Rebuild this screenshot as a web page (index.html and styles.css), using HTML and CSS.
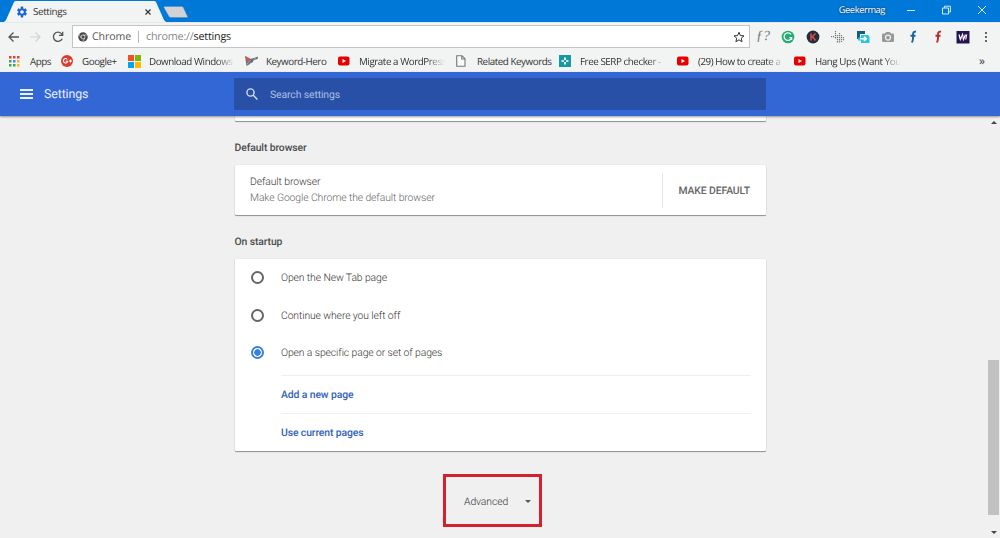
FILE: index.html
```
<!DOCTYPE html>
<html lang="en">
<head>
    <meta charset="UTF-8">
    <meta name="viewport" content="width=device-width, initial-scale=1.0">
    <title>Settings</title>
    <link rel="stylesheet" href="styles.css">
</head>
<body>

    <!-- Tab strip -->
    <div class="tabstrip">
        <div class="tab">
            <svg class="tab-bg" width="162" height="22" viewBox="0 0 162 22"><path d="M0 22L2 20L10 2Q10.500 1 12 1H150Q151.500 1 152 2L160 20L162 22Z" fill="#f2f3f3"/></svg>
            <svg class="gear" width="12" height="12" viewBox="0 0 24 24"><path fill="#1a66d0" d="M19.400 13l.1-1-.1-1 2.500-2-2.500-4.300-3 1.200-1.800-1L14.200 1H9.800l-.4 3.900-1.800 1-3-1.200L2.100 9l2.500 2-.1 1 .1 1-2.500 2 2.500 4.300 3-1.200 1.800 1 .4 3.900h4.400l.4-3.900 1.800-1 3 1.200 2.500-4.300zM12 15.600a3.600 3.600 0 1 1 0-7.200 3.600 3.600 0 0 1 0 7.200z"/></svg>
            <span class="tab-title">Settings</span>
            <svg class="tab-close" width="6" height="6" viewBox="0 0 6 6"><path d="M.5.5l5 5m0-5l-5 5" stroke="#333" stroke-width="1.200"/></svg>
        </div>
        <svg class="new-tab" width="26" height="13" viewBox="0 0 26 13"><path d="M1.500.5H18.500Q20 .5 20.500 1.800L25 11.500H8Q6.500 11.500 6 10.500L.8 1.500Z" fill="#d0d2d6" stroke="#4d88bd" stroke-width=".5"/></svg>
        <span class="user">Geekermag</span>
        <svg class="window-buttons" width="80" height="10" viewBox="0 0 80 10" fill="none" stroke="#d6eaff" stroke-width="1"><path d="M1 5.500H9M36.500 3H42.500V9H36.500ZM38.500 3V1.200H44.400V7H42.500M72 1l8 8m0-8l-8 8"/></svg>
    </div>

    <!-- Toolbar -->
    <div class="toolbar">
        <svg class="nav-icons" width="56" height="14" viewBox="0 0 56 14" fill="none"><path d="M11 7H1M5.500 2.500L1 7l4.500 4.500" stroke="#555" stroke-width="1.300"/><path d="M22 7H32M27.500 2.500L32 7l-4.500 4.500" stroke="#d3d3d3" stroke-width="1.200"/><path d="M54.200 8.700A4.600 4.600 0 1 1 53.500 3.800L54.500 5M54.700 1.800V5.400H51" stroke="#555" stroke-width="1.300"/></svg>
        <div class="omnibox">
            <svg width="10" height="10" viewBox="0 0 20 20"><circle cx="10" cy="10" r="9.500" fill="#484848"/><circle cx="10" cy="10" r="4" fill="#484848" stroke="#e8e8e8" stroke-width="1.500"/><path d="M10 6H19M6.500 12L2 4.500M13.500 12L9 19.500" stroke="#e8e8e8" stroke-width="1.300"/></svg>
            <span class="origin">Chrome</span>
            <span class="url">chrome://<b>settings</b></span>
            <svg class="star" width="12" height="12" viewBox="0 0 24 24"><path d="M12 2.500l2.800 6.600 7.200.6-5.500 4.700 1.700 7L12 17.700l-6.200 3.700 1.700-7L2 9.700l7.200-.6z" fill="none" stroke="#333" stroke-width="2"/></svg>
        </div>
        <div class="extensions">
            <span class="fq">ƒ?</span>
            <svg width="14" height="14" viewBox="0 0 14 14"><circle cx="7" cy="7" r="6.300" fill="#24ad70"/><path d="M10 4.400A3.800 3.800 0 1 0 10.600 7.600H8.300M10.600 7.600V10" fill="none" stroke="#fff" stroke-width="1.300"/></svg>
            <svg width="14" height="14" viewBox="0 0 14 14"><circle cx="7" cy="7" r="6.400" fill="#252d3d"/><path d="M5 3.500V10.500M9.500 3.500L5.500 7.500M6.500 6.500L9.500 10.500" fill="none" stroke="#cf4f4f" stroke-width="1.600"/></svg>
            <svg width="14" height="14" viewBox="0 0 14 14"><path d="M4.500 1V9M6.500 5V13M8.500 3V13M10.500 5V12M2.500 6V8M.5 6V8M12.500 7V11" fill="none" stroke="#777" stroke-width="1.200" stroke-dasharray="1.200 .7"/></svg>
            <svg width="14" height="14" viewBox="0 0 14 14"><path d="M1 1H9V4H4V9H1Z" fill="#155c80"/><path d="M5 5H12L13.500 6.500V13H5V10.500H2V7.500H5Z" fill="#27c6dc"/><path d="M4 8.800H10M8 6.500L10.300 8.800L8 11" fill="none" stroke="#fff" stroke-width="1.500"/></svg>
            <svg width="14" height="14" viewBox="0 0 14 14"><path d="M2 3.500H4L5 2H9L10 3.500H12Q13 3.500 13 4.500V11Q13 12 12 12H2Q1 12 1 11V4.500Q1 3.500 2 3.500Z" fill="#999"/><circle cx="7" cy="7.600" r="2.500" fill="#999" stroke="#f2f2f2" stroke-width="1.200"/></svg>
            <svg width="14" height="14" viewBox="0 0 14 14"><path d="M10 1.700C7.500 1.200 7 3 7 5V8.500Q7 11 5.700 12.500M4.500 5.800H9.500" fill="none" stroke="#17659a" stroke-width="1.900"/></svg>
            <svg width="14" height="14" viewBox="0 0 14 14"><path d="M10 1.700C7.500 1.200 7 3 7 5V8.500Q7 11 5.700 12.500M4.500 5.800H9.500" fill="none" stroke="#bd2a25" stroke-width="1.900"/></svg>
            <svg width="14" height="14" viewBox="0 0 14 14"><path d="M.5 1H13.500V13.500H.5Z" fill="#221650"/><path d="M3 4.500L4.300 9.500L6.500 4.500L7.500 9.500L9.500 4.500M10.700 4.500L9.700 9.500" fill="none" stroke="#fff" stroke-width="1.200"/><path d="M6 9.500L7.500 5" stroke="#d058c8"/></svg>
            <svg class="dots" width="4" height="12" viewBox="0 0 4 12" fill="#444"><circle cx="2" cy="2" r="1.100"/><circle cx="2" cy="6" r="1.100"/><circle cx="2" cy="10" r="1.100"/></svg>
        </div>
    </div>

    <!-- Bookmarks bar -->
    <div class="bookmarks">
        <div class="bookmark">
            <svg width="11" height="11" viewBox="0 0 11 11"><path fill="#db4437" d="M0 0h2.500v2.500H0zM4 0h2.500v2.500H4zM8 0h2.500v2.500H8z"/><path fill="#3aa757" d="M0 4h2.500v2.500H0zM0 8h2.500v2.500H0zM4 8h2.500v2.500H4z"/><path fill="#4688f1" d="M4 4h2.500v2.500H4z"/><path fill="#f4b71e" d="M8 4h2.500v2.500H8zM8 8h2.500v2.500H8z"/></svg>
            <span>Apps</span>
        </div>
        <div class="bookmark">
            <svg width="12" height="12" viewBox="0 0 12 12"><circle cx="6" cy="6" r="6" fill="#d53e31"/><path d="M6.300 4.300A2.200 2.200 0 1 0 6.800 6.200H4.700M8 6H11M9.500 4.500V7.500" fill="none" stroke="#fff" stroke-width="1.100"/></svg>
            <span>Google+</span>
        </div>
        <div class="bookmark fade">
            <svg width="13" height="13" viewBox="0 0 13 13"><path fill="#f05022" d="M0 0h6v6H0z"/><path fill="#7db901" d="M7 0h6v6H7z"/><path fill="#03a4ef" d="M0 7h6v6H0z"/><path fill="#ffb901" d="M7 7h6v6H7z"/></svg>
            <span>Download Windows</span>
        </div>
        <div class="bookmark">
            <svg width="14" height="12" viewBox="0 0 14 12"><path d="M0 1L5 4L9 3L5 9L1.500 11Z" fill="#65758b"/><path d="M0 1L6 4L3 7Z" fill="#de5149"/><path d="M5 7L8 3.500L13 1.500L12.500 4L9 5L7 8Z" fill="#586b83"/><path d="M2 9L5.500 5M8 5L11 3" stroke="#d98a85"/></svg>
            <span>Keyword-Hero</span>
        </div>
        <div class="bookmark fade">
            <svg width="12" height="12" viewBox="0 0 12 12"><rect y="1.500" width="11.500" height="9" rx="2" fill="#e60000"/><path d="M4.500 4L8 6L4.500 8Z" fill="#fff"/></svg>
            <span>Migrate a WordPress</span>
        </div>
        <div class="bookmark">
            <svg width="10" height="12" viewBox="0 0 10 12"><path d="M.7.700H6L9 3.700V11.300H.7ZM5.800.7V4H9" fill="#fafafa" stroke="#777" stroke-width="1.100"/></svg>
            <span>Related Keywords</span>
        </div>
        <div class="bookmark fade">
            <svg width="12" height="12" viewBox="0 0 12 12"><path d="M0 0h12v12H0z" fill="#1699a3"/><path d="M6 2.500V5M6 7V9.500M2.500 6H5M7 6H9.500" stroke="#fff" stroke-width="1.700"/></svg>
            <span>Free SERP checker -</span>
        </div>
        <div class="bookmark fade">
            <svg width="12" height="12" viewBox="0 0 12 12"><rect y="1.500" width="11.500" height="9" rx="2" fill="#e60000"/><path d="M4.500 4L8 6L4.500 8Z" fill="#fff"/></svg>
            <span>(29) How to create a</span>
        </div>
        <div class="bookmark fade">
            <svg width="12" height="12" viewBox="0 0 12 12"><rect y="1.500" width="11.500" height="9" rx="2" fill="#e60000"/><path d="M4.500 4L8 6L4.500 8Z" fill="#fff"/></svg>
            <span>Hang Ups (Want You</span>
        </div>
        <div class="more">»</div>
    </div>

    <!-- Settings header -->
    <header>
        <svg class="menu" width="13" height="10" viewBox="0 0 13 10"><path d="M0 1H13M0 5H13M0 9H13" stroke="#e8efff" stroke-width="1.800"/></svg>
        <h1>Settings</h1>
        <div class="search">
            <svg width="12" height="12" viewBox="0 0 12 12" fill="none" stroke="#d5def2" stroke-width="1.400"><circle cx="4.500" cy="4.500" r="3.600"/><path d="M7.200 7.200L11.400 11.400"/></svg>
            <span>Search settings</span>
        </div>
    </header>

    <main>
        <div class="content">
            <div class="card card-previous"></div>

            <h2>Default browser</h2>
            <div class="card default-card">
                <div class="default-text">
                    <p>Default browser</p>
                    <p class="secondary">Make Google Chrome the default browser</p>
                </div>
                <div class="default-action">MAKE DEFAULT</div>
            </div>

            <h2>On startup</h2>
            <div class="card startup-card">
                <div class="option"><i class="radio"></i>Open the New Tab page</div>
                <div class="option"><i class="radio"></i>Continue where you left off</div>
                <div class="option"><i class="radio checked"></i>Open a specific page or set of pages</div>
                <div class="link-row">Add a new page</div>
                <div class="link-row">Use current pages</div>
            </div>

            <div class="advanced">
                <span>Advanced</span>
                <i class="caret"></i>
            </div>
        </div>

        <div class="scrollbar">
            <i class="arrow up"></i>
            <div class="thumb"></div>
            <i class="arrow down"></i>
        </div>
    </main>

</body>
</html>
```
FILE: styles.css
```
* {
    box-sizing: border-box;
}

body {
    margin: 0;
    width: 1000px;
    height: 538px;
    overflow: hidden;
    display: flex;
    flex-direction: column;
    background: #f0f0f0;
    font-family: Roboto, sans-serif;
    font-size: 10.4px;
    font-weight: 300;
    letter-spacing: -0.11px;
    color: #333;
    text-rendering: geometricPrecision;
}

svg {
    display: block;
    flex-shrink: 0;
}

/* Tab strip */
.tabstrip {
    height: 22px;
    display: flex;
    background: #0078d7;
    font-family: "Open Sans", sans-serif;
    font-size: 9.8px;
    font-weight: 400;
}

.tab {
    position: relative;
    display: flex;
    align-items: center;
    width: 162px;
    height: 22px;
    margin-left: 4px;
    padding: 1px 10px 0 12px;
}

.tab-bg {
    position: absolute;
    left: 0;
    top: 0;
}

.gear,
.tab-title,
.tab-close {
    position: relative;
}

.tab-title {
    margin-left: 5px;
    color: #333;
    letter-spacing: -0.35px;
}

.tab-close {
    margin-left: auto;
    margin-right: 5px;
}

.new-tab {
    margin: 6px 0 0 -3px;
}

.user {
    margin-left: auto;
    margin-right: 21px;
    line-height: 20px;
    color: #fff;
    font-size: 9.3px;
    letter-spacing: -0.4px;
    text-shadow: 0 0 2px #123;
}

.window-buttons {
    margin: 5px 14px 0 0;
}

/* Toolbar */
.toolbar {
    height: 28px;
    display: flex;
    align-items: center;
    background: #f2f3f3;
    border-top: 1px solid #e2e9f0;
    font-family: "Open Sans", sans-serif;
    font-weight: 400;
}

.nav-icons {
    margin-left: 8px;
}

.omnibox {
    width: 678px;
    height: 23px;
    margin-left: 8px;
    padding: 0 4px 0 5px;
    display: flex;
    align-items: center;
    background: #fff;
    border: 1px solid #c4c4c4;
    font-size: 10.8px;
    letter-spacing: -0.22px;
}

.origin {
    width: 47px;
    margin-left: 4px;
    line-height: 12px;
    border-right: 1px solid #bbb;
    color: #555;
    font-size: 10.6px;
    letter-spacing: -0.1px;
}

.url {
    margin-left: 7px;
    color: #888;
}

.url b {
    font-weight: normal;
    color: #222;
}

.star {
    margin-left: auto;
}

.extensions {
    flex: 1;
    display: flex;
    align-items: center;
    gap: 11px;
    padding-left: 6px;
}

.fq {
    width: 14px;
    font: italic 14px "Liberation Serif", serif;
    color: #777;
}

.dots {
    margin-left: 3px;
}

/* Bookmarks bar */
.bookmarks {
    height: 22px;
    display: grid;
    grid-template-columns: 52px 67px 117px 93px 118px 103px 118px 117px 185px auto;
    align-items: center;
    padding-left: 9px;
    background: #f2f3f3;
    font-family: "Open Sans", sans-serif;
    font-size: 9.8px;
    font-weight: 400;
    letter-spacing: -0.44px;
    color: #333;
}

.bookmark {
    display: grid;
    grid-template-columns: 21px auto;
    align-items: center;
    justify-content: start;
    white-space: nowrap;
}

.fade span {
    width: 86px;
    -webkit-mask-image: linear-gradient(to right, #000 68px, transparent 86px);
    mask-image: linear-gradient(to right, #000 68px, transparent 86px);
}

.more {
    font-size: 12px;
    line-height: 12px;
}

/* Settings header */
header {
    position: relative;
    z-index: 1;
    height: 44px;
    display: flex;
    align-items: center;
    padding-left: 20px;
    background: #3367d6;
    box-shadow: 0 1px 2px rgba(0, 0, 0, 0.4);
}

h1 {
    width: 190px;
    margin: 1px 0 0 11px;
    font-size: 12.4px;
    font-weight: 400;
    color: #e8efff;
}

.search {
    width: 532px;
    height: 32px;
    display: flex;
    align-items: center;
    gap: 12px;
    padding-left: 12px;
    background: #2850a7;
    border-radius: 1px;
    font-size: 10.4px;
    font-weight: 400;
    color: #aebfe5;
}

/* Page */
main {
    flex: 1;
    display: flex;
    justify-content: space-between;
}

.content {
    width: 531px;
    margin-left: 234.5px;
}

.card {
    background: #fff;
    border-radius: 1px;
    box-shadow: 0 1px 1px rgba(0, 0, 0, 0.4), 0 0 1px rgba(0, 0, 0, 0.2);
}

.card-previous {
    height: 5px;
}

h2 {
    margin: 0;
    font-size: 10.4px;
    line-height: 14px;
    font-weight: 500;
    color: #4c4c4c;
}

.card-previous + h2 {
    margin-top: 20px;
}

.default-card {
    height: 50px;
    margin: 10px 0 20px;
    display: flex;
    align-items: center;
    justify-content: space-between;
}

.default-text {
    padding: 0 0 0 15.5px;
}

.default-text p {
    margin: 0;
    line-height: 16px;
}

.default-text .secondary {
    color: #666;
}

.default-action {
    width: 104px;
    height: 35px;
    line-height: 36px;
    padding-left: 16px;
    border-left: 1px solid #e8e8e8;
    font-size: 10.4px;
    font-weight: 500;
    color: #666;
}

.startup-card {
    height: 192px;
    margin-top: 10px;
    padding-right: 15px;
}

.option {
    height: 37.5px;
    display: flex;
    align-items: center;
    padding-left: 16.5px;
}

.radio {
    width: 13px;
    height: 13px;
    margin-right: 17px;
    border: 2px solid #666;
    border-radius: 50%;
}

.radio.checked {
    border-color: #3980dc;
    background: radial-gradient(circle, #3980dc 3px, #fff 3.5px);
}

.link-row {
    height: 38px;
    margin-left: 46.5px;
    line-height: 37px;
    border-top: 1px solid #eee;
    font-weight: 500;
    color: #3162bd;
}

.option + .link-row {
    margin-top: 3px;
}

.advanced {
    width: 99px;
    height: 53px;
    margin: 23px 0 0 208.5px;
    padding: 1px 8px 0 18px;
    display: flex;
    align-items: center;
    justify-content: space-between;
    border: 3px solid #d3222d;
}

.caret {
    border: 3.5px solid transparent;
    border-top-color: #555;
    border-bottom: none;
}

/* Scrollbar */
.scrollbar {
    width: 13px;
    display: flex;
    flex-direction: column;
    align-items: center;
    padding: 5px 0 4px;
}

.thumb {
    width: 11px;
    height: 155px;
    margin: auto 0 16px;
    background: #c1c1c1;
}

.arrow {
    border: 3px solid transparent;
}

.arrow.up {
    border-bottom-color: #444;
    border-top: none;
}

.arrow.down {
    border-top-color: #444;
    border-bottom: none;
}
```
